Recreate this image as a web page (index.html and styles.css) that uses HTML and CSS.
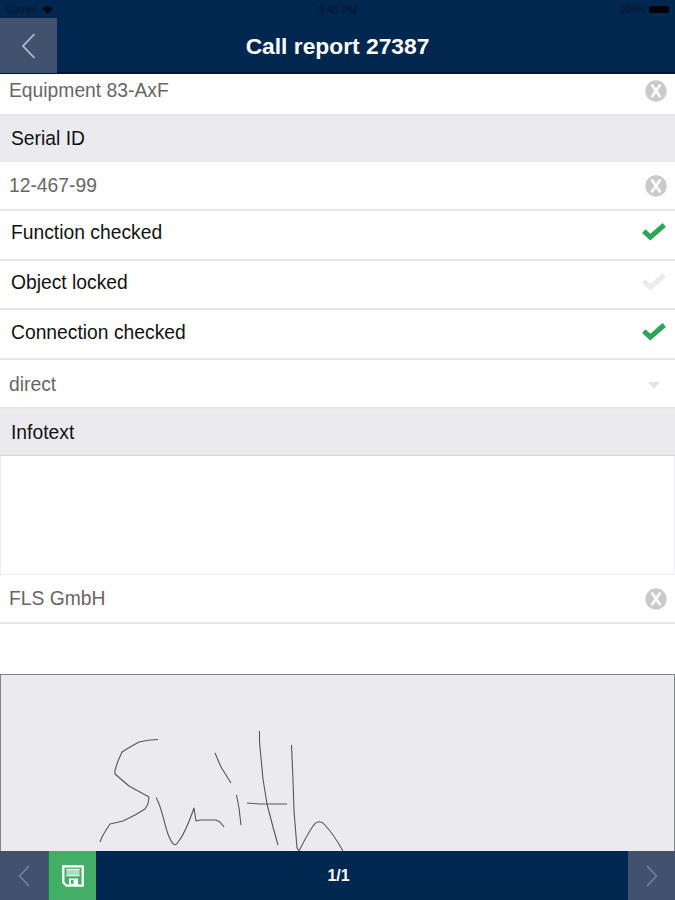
FILE: index.html
```html
<!DOCTYPE html>
<html lang="en">
<head>
    <meta charset="UTF-8">
    <meta name="viewport" content="width=device-width, initial-scale=1.0">
    <title>Call report 27387</title>
    <link rel="stylesheet" href="styles.css">
</head>
<body>
    <!-- Shared icons -->
    <svg class="icon-defs" width="0" height="0">
        <symbol id="icon-clear" viewBox="0 0 22 22">
            <circle cx="11" cy="11" r="10.7" fill="#cacaca"/>
            <path d="M6.6 4.6L15.4 17.2M15.4 4.6L6.6 17.2" stroke="#fff" stroke-width="2.6"/>
        </symbol>
        <symbol id="icon-check" viewBox="0 0 24 18">
            <path d="M1.8 8.2L8.3 14.2L22.2 2" fill="none" stroke="currentColor" stroke-width="5"/>
        </symbol>
    </svg>

    <div class="screen">
        <header class="header">
            <div class="status-bar">
                <span class="carrier">Carrier
                    <svg class="wifi" width="11" height="8" viewBox="0 0 11 8"><path d="M0 2.5Q5.5-1.8 11 2.5L5.5 8Z" fill="#000b1a"/></svg>
                </span>
                <span class="time">3:45 PM</span>
                <span class="power">100% <i class="battery"></i></span>
            </div>
            <div class="title-bar">
                <button class="back">
                    <svg width="14" height="26" viewBox="0 0 14 26"><path d="M12.5 1L1 13L12.5 25" fill="none" stroke="#b4bfce" stroke-width="1.8"/></svg>
                </button>
                <h1>Call report 27387</h1>
            </div>
        </header>

        <main class="form">
            <div class="row row-first">
                <span class="value">Equipment 83-AxF</span>
                <svg class="clear"><use href="#icon-clear"/></svg>
            </div>
            <div class="section">Serial ID</div>
            <div class="row row-serial">
                <span class="value">12-467-99</span>
                <svg class="clear"><use href="#icon-clear"/></svg>
            </div>
            <div class="row row-check">
                <span class="label">Function checked</span>
                <svg class="check on"><use href="#icon-check"/></svg>
            </div>
            <div class="row row-check">
                <span class="label">Object locked</span>
                <svg class="check"><use href="#icon-check"/></svg>
            </div>
            <div class="row row-check">
                <span class="label">Connection checked</span>
                <svg class="check on"><use href="#icon-check"/></svg>
            </div>
            <div class="row row-select">
                <span class="value">direct</span>
                <svg class="arrow" viewBox="0 0 12 7"><path d="M0 0H12L6 7Z" fill="#e3e3e5"/></svg>
            </div>
            <div class="section section-info">Infotext</div>
            <div class="textarea"></div>
            <div class="row row-company">
                <span class="value">FLS GmbH</span>
                <svg class="clear"><use href="#icon-clear"/></svg>
            </div>

            <!-- Signature field -->
            <div class="signature">
                <svg width="673" height="176" viewBox="1 675 673 176">
                    <path d="M158 739.5L148 740.2L139 742L130 747L122 752L118 761L115 770V774L122 780L129 786L149 797L148 804L145 809L135 815L123 821L110 824L106 830L102 837L100 842"/>
                    <path d="M156 797.5C162 807 164 824 168 834Q174 850 178 842C185 834 190 819 194 808L196 821L200 820H216L220 822L224 827"/>
                    <path d="M215 753L221 767L231 783M236.5 795L239 808L241 825"/>
                    <path d="M259.5 731V742L263 779L267 804L273 827L278 845M247 803L260 804H287"/>
                    <path d="M291.5 745L293 780L294 811L297 848L299 851C304 841 309 832 313 826Q319 818 325 825Q334 835 343 851"/>
                </svg>
            </div>
        </main>

        <footer class="footer">
            <button class="nav prev">
                <svg width="12" height="22" viewBox="0 0 12 22"><path d="M11 1L1.5 11L11 21" fill="none" stroke="#7384a0" stroke-width="1.5"/></svg>
            </button>
            <button class="save">
                <svg width="22" height="22" viewBox="0 0 22 22">
                    <path d="M1.3 1.3H20.7V20.7H4.5L1.3 17.5Z" fill="none" stroke="#fff" stroke-width="2.3"/>
                    <path d="M4.5 4H17.5V10.5H4.5Z" fill="#a9dcb9"/>
                    <path d="M4.5 4.5H17.5M4.5 10.5H17.5" stroke="#e2f4e7" stroke-width="1.3"/>
                    <path d="M7 13.5H16V20H7Z" fill="#fff"/>
                    <path d="M9 15H11.5V19H9Z" fill="#43ae65"/>
                </svg>
            </button>
            <span class="page">1/1</span>
            <button class="nav next">
                <svg width="12" height="22" viewBox="0 0 12 22"><path d="M1 1L10.5 11L1 21" fill="none" stroke="#7384a0" stroke-width="1.5"/></svg>
            </button>
        </footer>
    </div>
</body>
</html>
```

FILE: styles.css
```css
* {
    box-sizing: border-box;
}

body {
    margin: 0;
    font-family: "Liberation Sans", Arial, sans-serif;
    font-size: 19.3px;
    background-color: #fff;
    color: #111;
}

button {
    border: none;
    padding: 0;
    display: flex;
    align-items: center;
    justify-content: center;
}

svg {
    display: block;
}

.icon-defs {
    position: absolute;
}

.screen {
    width: 675px;
    height: 900px;
    display: flex;
    flex-direction: column;
    overflow: hidden;
}

/* Header */
.header {
    height: 74px;
    background-color: #00274f;
    border-bottom: 2px solid #001237;
}

.status-bar {
    height: 18px;
    display: grid;
    grid-template-columns: 1fr auto 1fr;
    align-items: center;
    padding: 1px 6px 0;
    font-size: 10px;
    color: #001329;
}

.carrier,
.power {
    display: flex;
    align-items: center;
    gap: 5px;
}

.time {
    font-size: 10.5px;
}

.power {
    justify-content: flex-end;
    gap: 4px;
}

.battery {
    width: 20px;
    height: 7px;
    border-radius: 2px;
    background-color: #000;
}

.title-bar {
    height: 54px;
    display: grid;
    grid-template-columns: 57px 1fr 57px;
}

.back {
    height: 55px;
    padding-top: 1px;
    background-color: #40526d;
}

h1 {
    margin: 0;
    font-size: 22.8px;
    line-height: 57px;
    text-align: center;
    color: #fff;
}

/* Form rows */
.form {
    flex: 1;
    min-height: 0;
    display: flex;
    flex-direction: column;
}

.row {
    flex-shrink: 0;
    display: flex;
    align-items: center;
    justify-content: space-between;
    padding: 0 8px 0 9px;
    border-bottom: 2px solid #e6e6ea;
}

.row-first {
    height: 42px;
    padding-bottom: 7px;
}

.row-serial {
    height: 49px;
    padding-top: 1px;
}

.row-check {
    height: 49.7px;
    padding: 0 9px 3px 11px;
}

.row-select {
    height: 49px;
    padding-top: 3px;
    padding-right: 15px;
}

.row-company {
    height: 49px;
}

.value {
    color: #666;
}

.section {
    flex-shrink: 0;
    height: 46px;
    padding-left: 11px;
    line-height: 45px;
    background-color: #ebebef;
}

.section-info {
    height: 47px;
    line-height: 48px;
    border-bottom: 1px solid #d5d5da;
}

.clear {
    width: 22px;
    height: 22px;
}

.check {
    width: 24px;
    height: 18px;
    margin-bottom: 2px;
    color: #ebebed;
}

.check.on {
    color: #2ba558;
}

.arrow {
    width: 12px;
    height: 7px;
}

.textarea {
    flex-shrink: 0;
    height: 119px;
    border: 1px solid #ededf0;
    border-top: none;
}

.signature {
    flex: 1;
    min-height: 0;
    margin-top: 50px;
    border: 1px solid #85858d;
    border-bottom: none;
    background-color: #ebebef;
    overflow: hidden;
}

.signature path {
    fill: none;
    stroke: #55555a;
    stroke-width: 1.1;
    stroke-linejoin: round;
}

/* Footer */
.footer {
    height: 49px;
    flex-shrink: 0;
    display: grid;
    grid-template-columns: 48px 48px 1fr 47px;
    background-color: #00274f;
}

.nav {
    background-color: #40526d;
}

.save {
    background-color: #43ae65;
    border-left: 1px solid #1d7550;
}

.page {
    padding-right: 48px;
    padding-left: 1px;
    line-height: 49px;
    text-align: center;
    font-size: 16px;
    font-weight: bold;
    color: #fff;
}
```
